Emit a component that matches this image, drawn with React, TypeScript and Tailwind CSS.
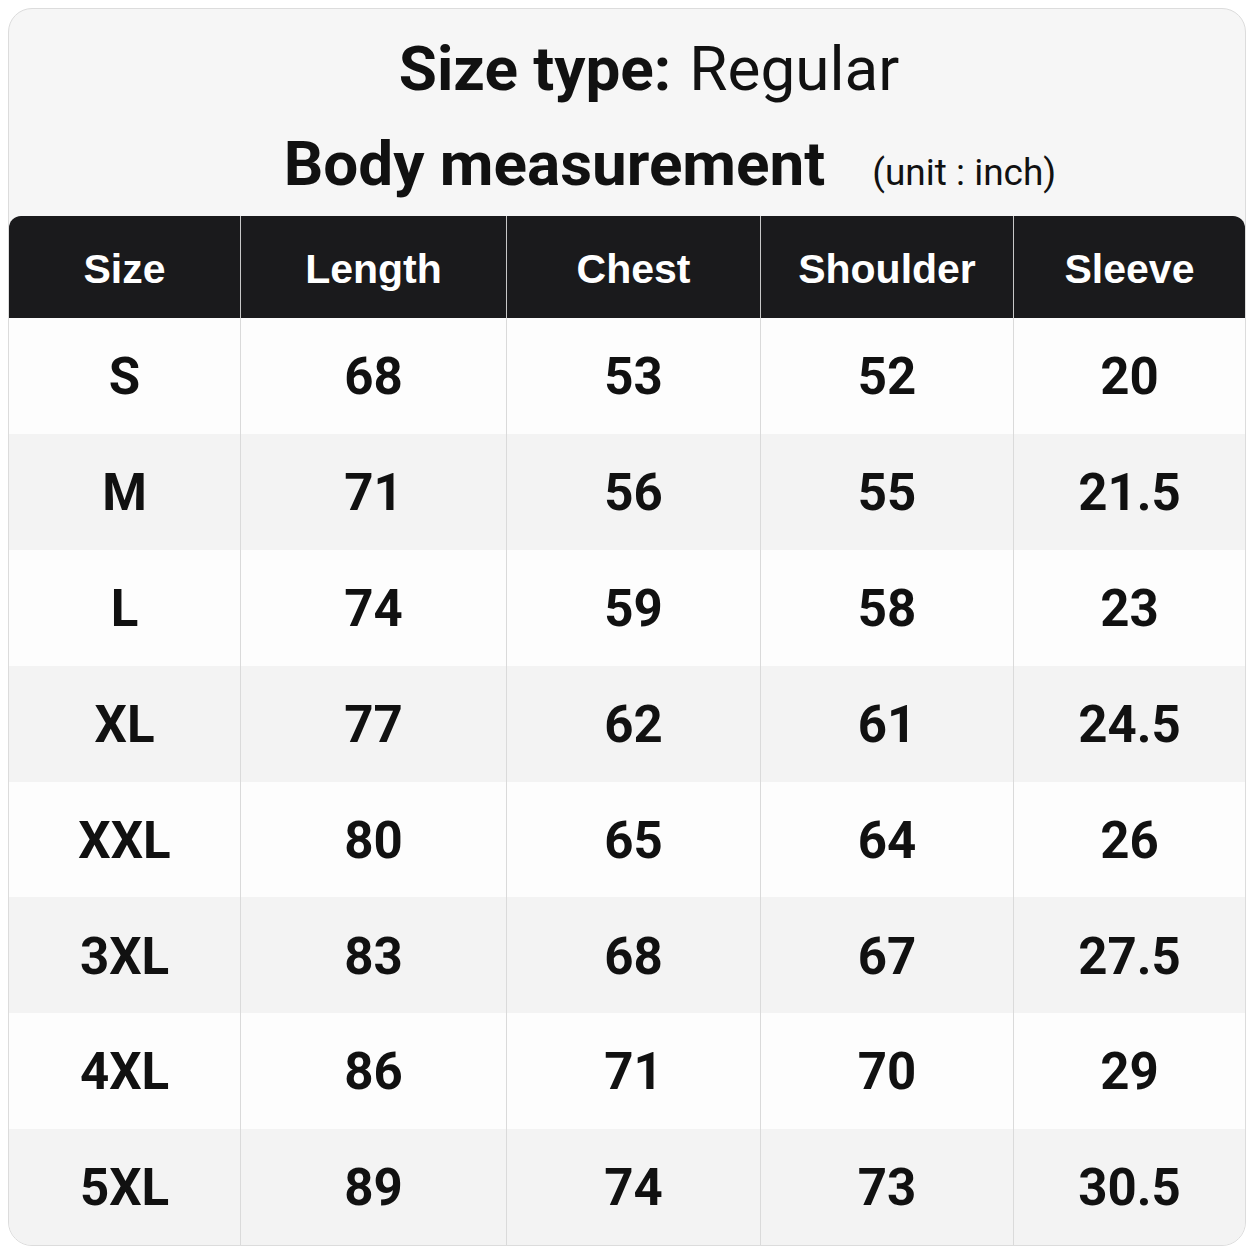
import React from "react"

const columns = ["Size", "Length", "Chest", "Shoulder", "Sleeve"]

const rows = [
    ["S", "68", "53", "52", "20"],
    ["M", "71", "56", "55", "21.5"],
    ["L", "74", "59", "58", "23"],
    ["XL", "77", "62", "61", "24.5"],
    ["XXL", "80", "65", "64", "26"],
    ["3XL", "83", "68", "67", "27.5"],
    ["4XL", "86", "71", "70", "29"],
    ["5XL", "89", "74", "73", "30.5"],
]

const grid = "grid grid-cols-[231px_266px_254px_253px_1fr]"

export default function App() {
    return (
        <div className="w-[1254px] h-[1254px] bg-white p-2 font-['Roboto','Liberation_Sans',sans-serif] text-[#111]">
            <div className="h-full flex flex-col bg-[#f6f6f6] border border-[#dcdcdc] rounded-[24px] overflow-hidden">
                <div className="h-[207px] flex flex-col items-center">
                    <div className="mt-[22px] ml-[44px] h-[76px] flex items-center text-[62px] leading-none">
                        <span className="font-bold">Size type:</span>
                        <span className="ml-[18px] font-normal">Regular</span>
                    </div>
                    <div className="mt-[26px] ml-[86px] flex items-baseline">
                        <span className="text-[62px] font-bold leading-none">Body measurement</span>
                        <span className="ml-[47px] text-[37px] leading-none">(unit : inch)</span>
                    </div>
                </div>

                <div className={`${grid} h-[102px] bg-[#1a1a1c] rounded-t-[12px]`}>
                    {columns.map((c, i) => (
                        <div
                            key={c}
                            className={`flex items-center justify-center pt-[6px] text-white text-[41px] font-bold font-['Liberation_Sans',sans-serif] ${i > 0 ? "border-l border-[#c8c8c8]" : ""}`}
                        >
                            {c}
                        </div>
                    ))}
                </div>

                <div className="flex-1 flex flex-col">
                    {rows.map((r, ri) => (
                        <div key={r[0]} className={`${grid} flex-1 ${ri % 2 === 0 ? "bg-[#fdfdfd]" : "bg-[#f3f3f3]"}`}>
                            {r.map((v, i) => (
                                <div
                                    key={i}
                                    className={`flex items-center justify-center pt-[3px] text-[51px] font-bold ${i > 0 ? "border-l border-[#dadada]" : ""}`}
                                >
                                    {v}
                                </div>
                            ))}
                        </div>
                    ))}
                </div>
            </div>
        </div>
    )
}
